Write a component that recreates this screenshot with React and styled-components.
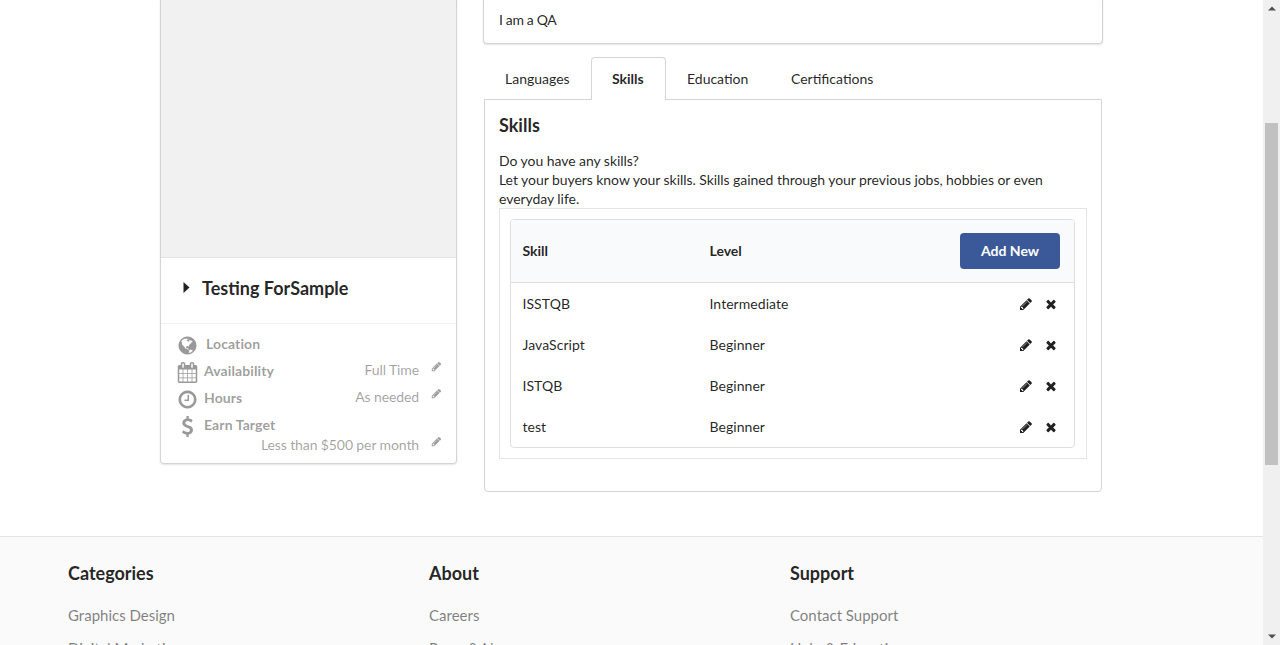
import React from "react";
import styled, { createGlobalStyle } from "styled-components";

const GlobalStyle = createGlobalStyle`
  * { box-sizing: border-box; }
  html, body { margin: 0; height: 100%; overflow: hidden; }
  body {
    font-family: Lato, "Liberation Sans", sans-serif;
    font-size: 14px;
    line-height: 19px;
    color: rgba(0, 0, 0, 0.87);
    background: #fff;
  }
  h3, h4, p { margin: 0; }
`;

const Window = styled.div`
  display: flex;
  width: 1280px;
  height: 645px;
  overflow: hidden;
`;

const Page = styled.div`
  width: 1263px;
  height: 645px;
  overflow: hidden;
`;

const Content = styled.main`
  display: flex;
  align-items: flex-start;
  gap: 26px;
  height: 536px;
  padding-left: 160px;
`;

const ProfileCard = styled.aside`
  width: 297px;
  height: 464px;
  border: 1px solid #d4d4d5;
  border-top: 0;
  border-radius: 0 0 4px 4px;
  box-shadow: 0 1px 2px rgba(34, 36, 38, 0.12);
`;

const Photo = styled.div`
  height: 258px;
  background: #f1f1f1;
  border-bottom: 1px solid #e3e3e3;
`;

const NameRow = styled.div`
  display: flex;
  align-items: center;
  gap: 12px;
  height: 66px;
  padding: 0 0 6px 22px;
  border-bottom: 1px solid #f0f0f0;
`;

const Name = styled.h3`
  font-size: 18px;
  line-height: 24px;
  font-weight: 700;
`;

const Details = styled.div`
  padding: 6px 14px 0 15px;
  color: rgba(0, 0, 0, 0.4);
`;

const Detail = styled.div`
  display: flex;
  align-items: flex-start;
  height: 27px;
`;

const DetailIcon = styled.span`
  display: flex;
  justify-content: center;
  width: 23px;
  height: 22px;
  padding-top: 4.5px;
`;

const DetailLabel = styled.span`
  padding: 4px 0 0 ${(p) => (p.$inset ? "7px" : "5px")};
  font-weight: 700;
  letter-spacing: 0.1px;
`;

const DetailValue = styled.span`
  display: flex;
  gap: 11.5px;
  margin-left: auto;
  margin-right: 0.5px;
  padding-top: ${(p) => p.$top ?? 3}px;
  color: rgba(0, 0, 0, 0.38);
  letter-spacing: -0.11px;

  svg {
    margin-top: 0.5px;
  }
`;

const ValueRow = styled.div`
  display: flex;
  height: 20px;
  margin-top: -3px;
`;

const Main = styled.section`
  width: 620px;
`;

const AboutCard = styled.div`
  height: 44px;
  padding: 10px 15px;
  letter-spacing: -0.35px;
  border: 1px solid #d4d4d5;
  border-top: 0;
  border-radius: 0 0 4px 4px;
  box-shadow: 0 1px 2px rgba(34, 36, 38, 0.12);
`;

const Tabs = styled.nav`
  display: flex;
  height: 43px;
  margin: 13px 1px -1px;
`;

const Tab = styled.a`
  width: ${(p) => p.$width}px;
  padding: 11px 0 0 ${(p) => (p.$active ? 20 : 21)}px;
  font-weight: ${(p) => (p.$active ? 700 : 400)};
  background: #fff;
  border: ${(p) => (p.$active ? "1px solid #d4d4d5" : "1px solid transparent")};
  border-left-width: ${(p) => (p.$active ? "1px" : "0")};
  border-bottom: 0;
  border-radius: 4px 4px 0 0;
  position: relative;
  z-index: ${(p) => (p.$active ? 1 : -1)};
`;

const Panel = styled.div`
  height: 393px;
  margin: 0 1px;
  padding: 13px 14px;
  border: 1px solid #d4d4d5;
  border-radius: 0 0 4px 4px;
`;

const Description = styled.p`
  margin: 14px 0 0;
  width: 570px;
  letter-spacing: -0.055px;
`;

const Frame = styled.div`
  height: 251px;
  padding: 10px 11px 10px 10px;
  border: 1px solid #e3e4e5;
`;

const Table = styled.div`
  height: 229px;
  border: 1px solid #dededf;
  border-radius: 4px;
  overflow: hidden;
`;

const Row = styled.div`
  display: grid;
  grid-template-columns: 187px 1fr auto;
  align-items: center;
  height: 41px;
  padding: 0 16px 0 11.5px;
  letter-spacing: 0.05px;
`;

const HeadRow = styled(Row)`
  height: 63px;
  padding: 0 14px 0 11.5px;
  letter-spacing: normal;
  background: #f9fafb;
  border-bottom: 1px solid #dededf;
  font-weight: 700;

  span {
    padding-bottom: 1px;
  }
`;

const Actions = styled.span`
  display: flex;
  gap: 11.5px;
`;

const AddButton = styled.button`
  width: 100px;
  height: 36px;
  padding: 0;
  border: 0;
  border-radius: 4px;
  background: #3b5998;
  color: #fff;
  font: 700 14px/36px Lato, sans-serif;
`;

const Footer = styled.footer`
  display: grid;
  grid-template-columns: 361px 361px 361px;
  height: 220px;
  padding: 24px 0 0 68px;
  border-top: 1px solid #e2e3e3;
  background: #fafafa;
`;

const FooterLinks = styled.div`
  display: flex;
  flex-direction: column;
  gap: 13px;
  padding-top: 20px;
  font-size: 15px;
  line-height: 20px;
  color: rgba(0, 0, 0, 0.5);
`;

const Scrollbar = styled.div`
  display: flex;
  flex-direction: column;
  align-items: center;
  justify-content: space-between;
  width: 17px;
  padding: 6px 0;
  background: #f0f0f0;
`;

const Thumb = styled.div`
  width: 13px;
  height: 342px;
  margin: 0 0 57px;
  background: #c1c1c1;
`;

const Glyph = styled.svg`
  display: block;
  flex: none;
  fill: currentColor;
  overflow: visible;
`;

const paths = {
  pencil:
    "M491 1536l91-91-235-235-91 91v107h128v128h107zm523-928q0-22-22-22-10 0-17 7l-542 542q-7 7-7 17 0 22 22 22 10 0 17-7l542-542q7-7 7-17zm-54-192l416 416-832 832h-416v-416zm683 96q0 53-37 90l-166 166-416-416 166-165q36-38 90-38 53 0 91 38l235 234q37 39 37 91z",
  remove:
    "M1490 1322q0 40-28 68l-136 136q-28 28-68 28t-68-28l-294-294-294 294q-28 28-68 28t-68-28l-136-136q-28-28-28-68t28-68l294-294-294-294q-28-28-28-68t28-68l136-136q28-28 68-28t68 28l294 294 294-294q28-28 68-28t68 28l136 136q28 28 28 68t-28 68l-294 294 294 294q28 28 28 68z",
  calendar:
    "M192 1664h288v-288h-288v288zm352 0h320v-288h-320v288zm-352-352h288v-320h-288v320zm352 0h320v-320h-320v320zm-352-384h288v-288h-288v288zm736 736h320v-288h-320v288zm-384-736h320v-288h-320v288zm768 736h288v-288h-288v288zm-384-352h320v-320h-320v320zm-352-864v-288q0-13-9.5-22.5t-22.5-9.5h-64q-13 0-22.5 9.5t-9.5 22.5v288q0 13 9.5 22.5t22.5 9.5h64q13 0 22.5-9.5t9.5-22.5zm736 864h288v-320h-288v320zm-384-384h320v-288h-320v288zm384 0h288v-288h-288v288zm32-480v-288q0-13-9.5-22.5t-22.5-9.5h-64q-13 0-22.5 9.5t-9.5 22.5v288q0 13 9.5 22.5t22.5 9.5h64q13 0 22.5-9.5t9.5-22.5zm384-64v1280q0 52-38 90t-90 38h-1408q-52 0-90-38t-38-90v-1280q0-52 38-90t90-38h128v-96q0-66 47-113t113-47h64q66 0 113 47t47 113v96h384v-96q0-66 47-113t113-47h64q66 0 113 47t47 113v96h128q52 0 90 38t38 90z",
  clock:
    "M1024 544v448q0 14-9 23t-23 9h-320q-14 0-23-9t-9-23v-64q0-14 9-23t23-9h224v-352q0-14 9-23t23-9h64q14 0 23 9t9 23zm416 352q0-148-73-273t-198-198-273-73-273 73-198 198-73 273 73 273 198 198 273 73 273-73 198-198 73-273zm224 0q0 209-103 385.5t-279.5 279.5-385.5 103-385.5-103-279.5-279.5-103-385.5 103-385.5 279.5-279.5 385.5-103 385.5 103 279.5 279.5 103 385.5z",
  dollar:
    "M1362 1185q0 153-99.5 263.5t-258.5 136.5v175q0 14-9 23t-23 9h-135q-13 0-22.5-9.5t-9.5-22.5v-175q-66-9-127.5-31t-101.5-44.5-74-48-46.5-37.5-17.5-18q-17-21-2-41l103-135q7-10 23-12 15-2 24 9l2 2q113 99 243 125 37 8 74 8 81 0 142.5-43t61.5-122q0-28-15-53t-33.5-42-58.5-37.5-66-32-80-32.5q-39-16-61.5-25t-61.5-26.5-62.5-31-56.5-35.5-53.5-42.5-43.5-49-35.5-58-21-66.5-8.5-78q0-138 98-242t255-134v-180q0-13 9.5-22.5t22.5-9.5h135q14 0 23 9t9 23v176q57 6 110.5 23t87 33.5 63.5 37.5 39 29 15 14q17 18 5 38l-81 146q-8 15-23 16-14 3-27-7-3-3-14.5-12t-39-26.5-58.5-32-74.5-26-85.5-11.5q-95 0-155 43t-60 111q0 26 8.5 48t29.5 41.5 39.5 33 56 31 60.5 27 70 27.5q53 20 81 31.5t76 35 75.5 42.5 62 50 53 63.5 31.5 76.5 13 94z",
  globe:
    "M896 128q209 0 385.5 103t279.5 279.5 103 385.5-103 385.5-279.5 279.5-385.5 103-385.5-103-279.5-279.5-103-385.5 103-385.5 279.5-279.5 385.5-103zm274 521q-2 1-9.5 9.5t-13.5 9.5q2 0 4.5-5t5-11 3.5-7q6-7 22-15 14-6 52-12 34-8 51 11-2-2 9.5-13t14.5-12q3-2 15-4.5t15-7.5l2-22q-12 1-17.5-7t-6.5-21q0 2-6 8 0-7-4.5-8t-11.5 1-9 1q-10-3-15-7.5t-8-16.5-4-15q-2-5-9.5-11t-9.5-10q-1-2-2.5-5.5t-3-6.5-4-5.5-5.5-2.5-7 5-7.5 10-4.5 5q-3-2-6-1.5t-4.5 1-4.5 3-5 3.5q-3 2-8.5 3t-8.5 2q15-5-1-11-10-4-16-3 9-4 7.5-12t-8.5-14h5q-1-4-8.5-8.5t-17.5-8.5-13-6q-8-5-34-9.5t-33-.5q-5 6-4.5 10.5t4 14 3.5 12.5q1 6-5.5 13t-6.5 12q0 7 14 15.5t10 21.5q-3 8-16 16t-16 12q-5 8-1.5 18.5t10.5 16.5q2 2 1.5 4t-3.5 4.5-5.5 4-6.5 3.5l-3 2q-11 5-20.5-6t-13.5-26q-7-25-16-30-23-8-29 1-5-13-41-26-25-9-58-4 6-1 0-15-7-15-19-12 3-6 4-17.5t1-13.5q3-13 12-23 1-1 7-8.5t9.5-13.5.5-6q35 4 50-11 5-5 11.5-17t10.5-17q9-6 14-5.5t14.5 5.5 14.5 5q14 1 15.5-11t-7.5-20q12 1 3-17-4-7-8-9-12-4-27 5-8 4 2 8-1-1-9.5 10.5t-16.5 17.5-16-5q-1-1-5.5-13.5t-9.5-13.5q-8 0-16 15 3-8-11-15t-24-8q19-12-8-27-7-4-20.5-5t-19.5 4q-5 7-5.5 11.5t5 8 10.5 5.5 11.5 4 8.5 3q14 10 8 14-2 1-8.5 3.5t-11.5 4.5-6 4q-3 4 0 14t-2 14q-5-5-9-17.5t-7-16.5q7 9-25 6l-10-1q-4 0-16 2t-20.5 1-13.5-8q-4-8 0-20 1-4 4-2-4-3-11-9.5t-10-8.5q-46 15-94 41 6 1 12-1 5-2 13-6.5t10-5.5q34-14 42-7l5-5q14 16 20 25-7-4-30-1-20 6-22 12 7 12 5 18-4-3-11.5-10t-14.5-11-15-5q-16 0-22 1-146 80-235 222 7 7 12 8 4 1 5 9t2.5 11 11.5-3q9 8 3 19 1-1 44 27 19 17 21 21 3 11-10 18-1-2-9-9t-9-4q-3 5 .5 18.5t10.5 12.5q-7 0-9.5 16t-2.5 35.5-1 23.5l2 1q-3 12 5.5 34.5t21.5 19.5q-13 3 20 43 6 8 8 9 3 2 12 7.5t15 10 10 10.5q4 5 10 22.5t14 23.5q-2 6 9.5 20t10.5 23q-1 0-2.5 1t-2.5 1q3 7 15.5 14t15.5 13q1 3 2 10t3 11 8 2q2-20-24-62-15-25-17-29-3-5-5.5-15.5t-4.5-14.5q2 0 6 1.5t8.5 3.5 7.5 4 2 3q-3 7 2 17.5t12 18.5 17 19 12 13q6 6 14 19.5t0 13.5q9 0 20 10.5t17 19.5q5 8 8 26t5 24q2 7 8.5 13.5t12.5 9.5l16 8 13 7q5 2 18.5 10.5t21.5 11.5q10 4 16 4t14.5-2.5 13.5-3.5q15-2 29 15t21 21q36 19 55 11-2 1 .5 7.5t8 15.5 9 14.5 5.5 8.5q5 6 18 15t18 15q6-4 7-9-3 8 7 20t18 10q14-3 14-32-31 15-49-18 0-1-2.5-5.5t-4-8.5-2.5-8.5 0-7.5 5-3q9 0 10-3.5t-2-12.5-4-13q-1-8-11-20t-12-15q-5 9-16 8t-16-9q0 1-1.5 5.5t-1.5 6.5q-13 0-15-1 1-3 2.5-17.5t3.5-22.5q1-4 5.5-12t7.5-14.5 4-12.5-4.5-9.5-17.5-2.5q-19 1-26 20-1 3-3 10.5t-5 11.5-9 7q-7 3-24 2t-24-5q-13-8-22.5-29t-9.5-37q0-10 2.5-26.5t3-25-5.5-24.5q3-2 9-9.5t10-10.5q2-1 4.5-1.5t4.5 0 4-1.5 3-6q-1-1-4-3-3-3-4-3 7 3 28.5-1.5t27.5 1.5q15 11 22-2 0-1-2.5-9.5t-.5-13.5q5 27 29 9 3 3 15.5 5t17.5 5q3 2 7 5.5t5.5 4.5 5-.5 8.5-6.5q10 14 12 24 11 40 19 44 7 3 11 2t4.5-9.5 0-14-1.5-12.5l-1-8v-18l-1-8q-15-3-18.5-12t1.5-18.5 15-18.5q1-1 8-3.5t15.5-6.5 12.5-8q21-19 15-35 7 0 11-9-1 0-5-3t-7.5-5-4.5-2q9-5 2-16 5-3 7.5-11t7.5-10q9 12 21 2 8-8 1-16 5-7 20.5-10.5t18.5-9.5q7 2 8-2t1-12 3-12q4-5 15-9t13-5l17-11q3-4 0-4 18 2 31-11 10-11-6-20 3-6-3-9.5t-15-5.5q3-1 11.5-.5t10.5-1.5q15-10-7-16-17-5-43 12zm-163 877q206-36 351-189-3-3-12.5-4.5t-12.5-3.5q-18-7-24-8 1-7-2.5-13t-8-9-12.5-8-11-7q-2-2-7-6t-7-5.5-7.5-4.5-8.5-2-10 1l-3 1q-3 1-5.5 2.5t-5.5 3-4 3 0 2.5q-21-17-36-22-5-1-11-5.5t-10.5-7-10-1.5-11.5 7q-5 5-6 15t-2 13q-7-5 0-17.5t2-18.5q-3-6-10.5-4.5t-12 4.5-11.5 8.5-9 6.5-8.5 5.5-8.5 7.5q-3 4-6 12t-5 11q-2-4-11.5-6.5t-9.5-5.5q2 10 4 35t5 38q7 31-12 48-27 25-29 40-4 22 12 26 0 7-8 20.5t-7 21.5q0 6 2 16z",
};

function Icon({ name, size }) {
  return (
    <Glyph width={size} height={size} viewBox="0 0 1792 1792" fillRule="evenodd">
      <path d={paths[name]} />
    </Glyph>
  );
}

const skills = [
  ["ISSTQB", "Intermediate"],
  ["JavaScript", "Beginner"],
  ["ISTQB", "Beginner"],
  ["test", "Beginner"],
];

const footerColumns = [
  ["Categories", "Graphics Design", "Digital Marketing"],
  ["About", "Careers", "Press & News"],
  ["Support", "Contact Support", "Help & Education"],
];

function Value({ text, top }) {
  return (
    <DetailValue $top={top}>
      {text}
      <Icon name="pencil" size={11} />
    </DetailValue>
  );
}

export default function App() {
  return (
    <Window>
      <GlobalStyle />
      <Page>
        <Content>
          <ProfileCard>
            <Photo />
            <NameRow>
              <Glyph width="7" height="12" viewBox="0 0 7 12">
                <path d="M0.5 0L6.5 5.5L0.5 11z" />
              </Glyph>
              <Name>Testing ForSample</Name>
            </NameRow>
            <Details>
              <Detail>
                <DetailIcon><Icon name="globe" size={21} /></DetailIcon>
                <DetailLabel $inset>Location</DetailLabel>
              </Detail>
              <Detail>
                <DetailIcon><Icon name="calendar" size={21} /></DetailIcon>
                <DetailLabel>Availability</DetailLabel>
                <Value text="Full Time" />
              </Detail>
              <Detail>
                <DetailIcon><Icon name="clock" size={21} /></DetailIcon>
                <DetailLabel>Hours</DetailLabel>
                <Value text="As needed" />
              </Detail>
              <Detail>
                <DetailIcon><Icon name="dollar" size={21} /></DetailIcon>
                <DetailLabel>Earn Target</DetailLabel>
              </Detail>
              <ValueRow>
                <Value text="Less than $500 per month" top={0} />
              </ValueRow>
            </Details>
          </ProfileCard>
          <Main>
            <AboutCard>I am a QA</AboutCard>
            <Tabs>
              <Tab $width={107}>Languages</Tab>
              <Tab $width={75} $active>Skills</Tab>
              <Tab $width={104}>Education</Tab>
              <Tab $width={130}>Certifications</Tab>
            </Tabs>
            <Panel>
              <Name>Skills</Name>
              <Description>
                Do you have any skills?
                <br />
                Let your buyers know your skills. Skills gained through your previous jobs, hobbies or even everyday life.
              </Description>
              <Frame>
                <Table>
                  <HeadRow>
                    <span>Skill</span>
                    <span>Level</span>
                    <AddButton>Add New</AddButton>
                  </HeadRow>
                  {skills.map(([skill, level]) => (
                    <Row key={skill}>
                      <span>{skill}</span>
                      <span>{level}</span>
                      <Actions>
                        <Icon name="pencil" size={14} />
                        <Icon name="remove" size={14} />
                      </Actions>
                    </Row>
                  ))}
                </Table>
              </Frame>
            </Panel>
          </Main>
        </Content>
        <Footer>
          {footerColumns.map(([title, ...links]) => (
            <div key={title}>
              <Name>{title}</Name>
              <FooterLinks>
                {links.map((link) => (
                  <span key={link}>{link}</span>
                ))}
              </FooterLinks>
            </div>
          ))}
        </Footer>
      </Page>
      <Scrollbar>
        <Glyph width="8" height="5" viewBox="0 0 8 5" color="#505050">
          <path d="M4 0.5L8 4.5H0z" />
        </Glyph>
        <Thumb />
        <Glyph width="8" height="5" viewBox="0 0 8 5" color="#505050">
          <path d="M0 0.5H8L4 4.5z" />
        </Glyph>
      </Scrollbar>
    </Window>
  );
}
